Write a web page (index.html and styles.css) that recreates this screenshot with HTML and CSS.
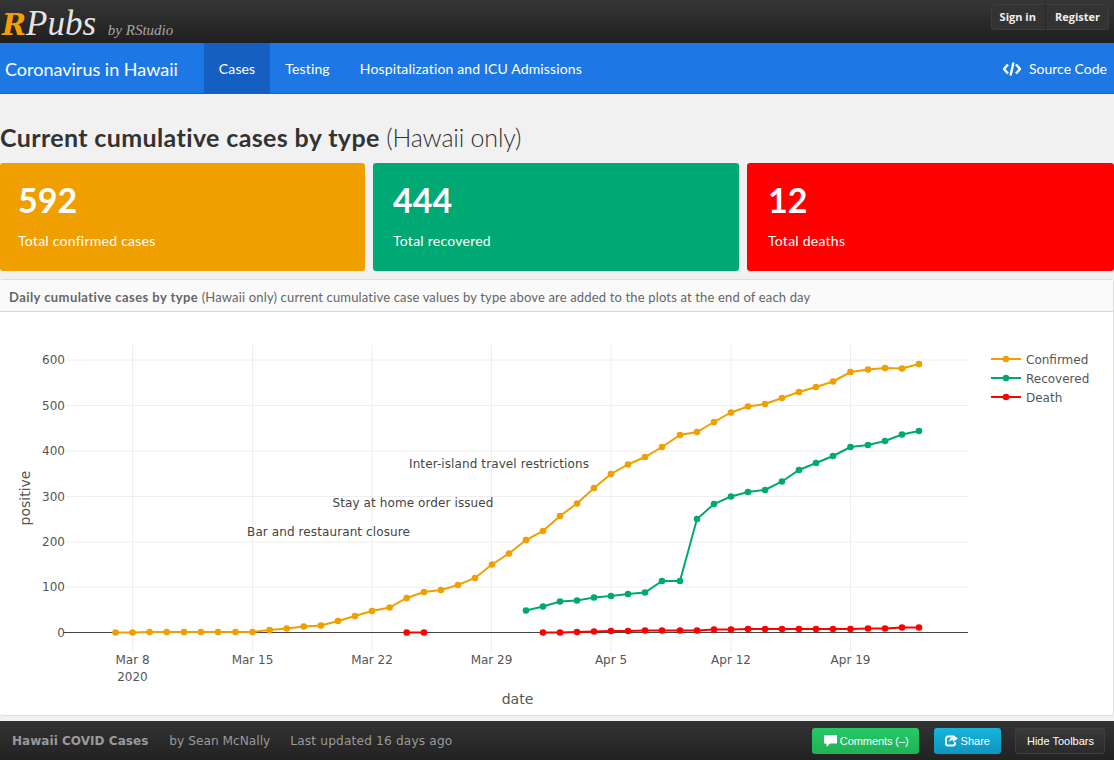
FILE: index.html
```html
<!DOCTYPE html>
<html lang="en">
<head>
  <meta charset="UTF-8" />
  <title>Coronavirus in Hawaii</title>
  <link rel="stylesheet" href="styles.css">
</head>
<body>
  <header class="topbar">
    <div class="logo"><b>R</b>Pubs <small>by RStudio</small></div>
    <div class="auth">
      <a href="#">Sign in</a>
      <a href="#">Register</a>
    </div>
  </header>

  <nav class="navbar">
    <span class="brand">Coronavirus in Hawaii</span>
    <a class="tab active" href="#">Cases</a>
    <a class="tab" href="#">Testing</a>
    <a class="tab" href="#">Hospitalization and ICU Admissions</a>
    <a class="source" href="#">
      <svg width="18" height="14" viewBox="0 0 18 14"><path d="M5 2.500L1 7l4 4.500M13 2.500L17 7l-4 4.500M10.500 .5L7.500 13.500" /></svg>
      Source Code
    </a>
  </nav>

  <main class="content">
    <h2 class="title"><strong>Current cumulative cases by type</strong> (Hawaii only)</h2>

    <section class="boxes">
      <div class="box orange">
        <div class="num">592</div>
        <div class="cap">Total confirmed cases</div>
      </div>
      <div class="box green">
        <div class="num">444</div>
        <div class="cap">Total recovered</div>
      </div>
      <div class="box red">
        <div class="num">12</div>
        <div class="cap">Total deaths</div>
      </div>
    </section>

    <section class="card">
      <div class="card-title"><strong>Daily cumulative cases by type</strong> (Hawaii only) current cumulative case values by type above are added to the plots at the end of each day</div>
      <svg class="plot" width="1113" height="404" viewBox="0 312 1113 404">
        <defs>
          <marker id="dot-o" markerUnits="userSpaceOnUse" markerWidth="8" markerHeight="8" refX="4" refY="4"><circle class="dot-orange" cx="4" cy="4" r="3.300" /></marker>
          <marker id="dot-g" markerUnits="userSpaceOnUse" markerWidth="8" markerHeight="8" refX="4" refY="4"><circle class="dot-green" cx="4" cy="4" r="3.300" /></marker>
          <marker id="dot-r" markerUnits="userSpaceOnUse" markerWidth="8" markerHeight="8" refX="4" refY="4"><circle class="dot-red" cx="4" cy="4" r="3.300" /></marker>
        </defs>

        <!-- grid -->
        <path class="grid" d="M66 360H968M66 405.500H968M66 451H968M66 496.500H968M66 542H968M66 587H968" />
        <path class="grid" d="M132.500 345V652M252.500 345V652M372 345V652M491.500 345V652M611 345V652M731 345V652M850.500 345V652" />
        <path class="zero" d="M63 632.500H968" />

        <!-- axes -->
        <g class="tick tick-y">
          <text x="65" y="364">600</text>
          <text x="65" y="409.500">500</text>
          <text x="65" y="455">400</text>
          <text x="65" y="500.500">300</text>
          <text x="65" y="546">200</text>
          <text x="65" y="591">100</text>
          <text x="65" y="636.500">0</text>
        </g>
        <g class="tick tick-x">
          <text x="132.500" y="664">Mar 8</text>
          <text x="132.500" y="681">2020</text>
          <text x="252.500" y="664">Mar 15</text>
          <text x="372" y="664">Mar 22</text>
          <text x="491.500" y="664">Mar 29</text>
          <text x="611" y="664">Apr 5</text>
          <text x="731" y="664">Apr 12</text>
          <text x="850.500" y="664">Apr 19</text>
        </g>
        <text class="axis-title" x="517.500" y="704">date</text>
        <text class="axis-title" transform="translate(30 498) rotate(-90)">positive</text>

        <!-- series -->
        <polyline class="line line-orange" points="115.500,632.500 132.500,632.500 149.600,632 166.800,632 184,632 201,632 218,632 235.500,632 252.500,632 269.600,630 286.700,628.500 303.800,626.500 321,625.500 338,621 355,616 372,611 389.600,607.500 406.700,598 424,592 441,590 458,585 475,578 492,564.500 509,553.500 526,540 543,531 560,516 577,503.500 594,488 611,474 628,464.500 645,457 662,447 680,435 697,432 714,422 731,412.500 748,406.500 765,404 782,398 799,392 816,387 833,381.500 850.500,372 868,369.500 885,368 902,368.500 919,364" />
        <polyline class="line line-green" points="526,610.500 543,606.500 560,601.500 577,600.500 594,597.500 611,596 628,594 645,592.500 662,581 680,581 697,519 714,504 731,496.500 748,492 765,490 782,481.500 799,470 816,463 833,456 850.500,447 868,445 885,441 902,434.500 919,431" />
        <polyline class="line line-red" points="406.700,632.500 424,632.500" />
        <polyline class="line line-red" points="543,632.500 560,632.500 577,632 594,631.500 611,631 628,631 645,630.500 662,630.500 680,630.500 697,630.500 714,629.500 731,629.500 748,629 765,629 782,629 799,629 816,629 833,629 850.500,629 868,628.500 885,628.500 902,627.500 919,627.500" />

        <!-- annotations -->
        <text class="note" x="499" y="468">Inter-island travel restrictions</text>
        <text class="note" x="413" y="507">Stay at home order issued</text>
        <text class="note" x="328.500" y="536">Bar and restaurant closure</text>

        <!-- legend -->
        <polyline class="line line-orange" points="991,359 1006,359 1021,359" />
        <polyline class="line line-green" points="991,378 1006,378 1021,378" />
        <polyline class="line line-red" points="991,397 1006,397 1021,397" />
        <text class="legend" x="1026" y="364">Confirmed</text>
        <text class="legend" x="1026" y="383">Recovered</text>
        <text class="legend" x="1026" y="402">Death</text>
      </svg>
    </section>
  </main>

  <footer class="bottombar">
    <span class="doc-title">Hawaii COVID Cases</span>
    <span class="doc-meta">by Sean McNally</span>
    <span class="doc-meta">Last updated 16 days ago</span>
    <div class="actions">
      <a class="btn btn-comments" href="#">
        <svg width="13" height="12" viewBox="0 0 13 12"><path d="M0 0H13V8.500H6L2.500 12V8.500H0Z" /></svg>
        Comments (–)
      </a>
      <a class="btn btn-share" href="#">
        <svg width="13" height="12" viewBox="0 0 13 12"><path class="share-box" d="M8.500 1.500H3A2 2 0 0 0 1 3.500V8.500A2 2 0 0 0 3 10.500H8A2 2 0 0 0 10 8.500V7" /><path d="M8 0L13 3.500L8 7V5C5.500 5 4.500 6 4 7.500C4 4.500 5.500 2.500 8 2.200Z" /></svg>
        Share
      </a>
      <a class="btn btn-hide" href="#">Hide Toolbars</a>
    </div>
  </footer>
</body>
</html>
```

FILE: styles.css
```css
html, body {
  height: 100%;
}

body {
  margin: 0;
  height: 760px;
  overflow: hidden;
  display: flex;
  flex-direction: column;
  font-family: 'Lato', sans-serif;
  background: #f1f1f1;
  color: #333;
}

a {
  text-decoration: none;
  color: inherit;
}

/* top toolbar */
.topbar {
  height: 43px;
  flex: none;
  display: flex;
  justify-content: space-between;
  padding: 0 5px 0 2px;
  background: linear-gradient(#363636, #1f1f1f);
}

.logo {
  font-family: 'Liberation Serif', serif;
  font-style: italic;
  font-size: 35px;
  line-height: 36px;
  padding-top: 6px;
  height: 37px;
  color: #e4e4e4;
  white-space: nowrap;
}

.logo b {
  font-family: 'DejaVu Serif', serif;
  font-size: 29px;
  color: #f59e00;
}

.logo small {
  font-size: 15px;
  color: #a5a5a5;
  margin-left: 3px;
}

.auth {
  display: flex;
  height: 26px;
  margin-top: 4px;
  border-radius: 4px;
  background: #333;
  box-shadow: inset 0 0 0 1px #3d3d3d;
}

.auth a {
  font-family: 'Open Sans', sans-serif;
  font-size: 11px;
  font-weight: 700;
  line-height: 26px;
  color: #eee;
  padding: 0 9px;
}

.auth a + a {
  border-left: 1px solid #272727;
}

/* blue nav */
.navbar {
  height: 50px;
  flex: none;
  display: flex;
  align-items: stretch;
  background: #1d78e6;
  border-bottom: 1px solid #1563c4;
  color: #fff;
  font-size: 14px;
  line-height: 52px;
}

.brand {
  font-size: 18px;
  padding-left: 5px;
  margin-right: 26px;
}

.tab {
  padding: 0 15px;
  letter-spacing: .14px;
}

.tab.active {
  background: #155fc0;
}

.source {
  margin-left: auto;
  padding: 2px 7px 0 0;
  display: flex;
  align-items: center;
  gap: 8px;
}

.source svg {
  fill: none;
  stroke: #fff;
  stroke-width: 2.400;
}

/* page content */
.content {
  flex: 1;
  display: flex;
  flex-direction: column;
  min-height: 0;
}

.title {
  margin: 27px 0 10px;
  font-size: 25px;
  font-weight: 300;
  line-height: 32px;
  letter-spacing: -.2px;
  white-space: nowrap;
}

.title strong {
  font-weight: 700;
  letter-spacing: .37px;
}

.boxes {
  display: grid;
  grid-template-columns: 365px 366px 1fr;
  gap: 8px;
  height: 108px;
}

.box {
  border-radius: 3px;
  color: #fff;
  padding: 18px 20px;
}

.orange { background: #f09f00; padding-left: 18px; }
.green { background: #00a874; }
.red { background: #ff0000; padding-left: 21px; }

.num {
  font-size: 34px;
  font-weight: 700;
  line-height: 38px;
}

.cap {
  margin-top: 12px;
  font-size: 14px;
  line-height: 20px;
  letter-spacing: .25px;
}

.card {
  margin-top: 8px;
  height: 437px;
  flex: none;
  background: #fff;
  border: 1px solid #ddd;
  border-left: none;
  border-radius: 3px;
  box-sizing: border-box;
}

.card-title {
  height: 32px;
  box-sizing: border-box;
  padding: 0 9px;
  font-size: 13px;
  line-height: 34px;
  letter-spacing: .16px;
  color: #666;
  background: #fafafa;
  border-bottom: 1px solid #d8d8d8;
  white-space: nowrap;
}

.card-title strong {
  font-weight: 700;
  letter-spacing: .43px;
}

.plot {
  display: block;
  font-family: 'DejaVu Sans', sans-serif;
}

/* plot parts */
.grid {
  fill: none;
  stroke: #eee;
  stroke-width: 1;
}

.zero {
  fill: none;
  stroke: #444;
  stroke-width: 1;
}

.tick text {
  font-size: 12px;
  fill: #555;
}

.tick-y text {
  text-anchor: end;
}

.tick-x text {
  text-anchor: middle;
}

.axis-title {
  font-size: 14px;
  fill: #555;
  text-anchor: middle;
}

.note {
  font-size: 12px;
  fill: #444;
  text-anchor: middle;
  letter-spacing: .1px;
}

.legend {
  font-size: 12px;
  fill: #555;
}

.line {
  fill: none;
  stroke-width: 2;
}

.line-orange {
  stroke: #f09f00;
  marker-start: url(#dot-o);
  marker-mid: url(#dot-o);
  marker-end: url(#dot-o);
}

.line-green {
  stroke: #00a874;
  marker-start: url(#dot-g);
  marker-mid: url(#dot-g);
  marker-end: url(#dot-g);
}

.line-red {
  stroke: #ff0000;
  marker-start: url(#dot-r);
  marker-mid: url(#dot-r);
  marker-end: url(#dot-r);
}

.dot-orange { fill: #f09f00; }
.dot-green { fill: #00a874; }
.dot-red { fill: #ff0000; }

/* legend lines only have a dot in the middle */
.plot > polyline:nth-last-of-type(-n+3) {
  marker-start: none;
  marker-end: none;
}

/* bottom toolbar */
.bottombar {
  height: 39px;
  flex: none;
  margin-top: auto;
  display: flex;
  align-items: center;
  padding: 0 9px 0 12px;
  background: linear-gradient(#333, #222);
  font-family: 'DejaVu Sans', sans-serif;
  font-size: 12.200px;
  color: #9a9a9a;
}

.doc-title {
  font-size: 12px;
  font-weight: bold;
  letter-spacing: .04px;
  margin-right: 21px;
}

.doc-meta {
  margin-right: 20px;
}

.doc-meta + .doc-meta {
  letter-spacing: .15px;
}

.actions {
  margin-left: auto;
  display: flex;
  gap: 14px;
  font-family: 'Liberation Sans', sans-serif;
  font-size: 11px;
  color: #fff;
}

.btn {
  height: 26px;
  display: flex;
  align-items: center;
  gap: 3px;
  padding: 0 11px 0 12px;
  border-radius: 3px;
  box-sizing: border-box;
}

.btn svg {
  fill: #fff;
}

.btn svg .share-box {
  fill: none;
  stroke: #fff;
  stroke-width: 1.800;
}

.btn-comments {
  margin-right: 1px;
  padding-right: 10px;
  letter-spacing: -.08px;
  background: linear-gradient(#27c866, #1fb255);
}

.btn-share {
  padding-left: 11px;
  background: linear-gradient(#17b4dc, #0f94c0);
}

.btn-hide {
  background: linear-gradient(#3a3a3a, #2a2a2a);
  box-shadow: inset 0 0 0 1px #3e3e3e;
}
```
